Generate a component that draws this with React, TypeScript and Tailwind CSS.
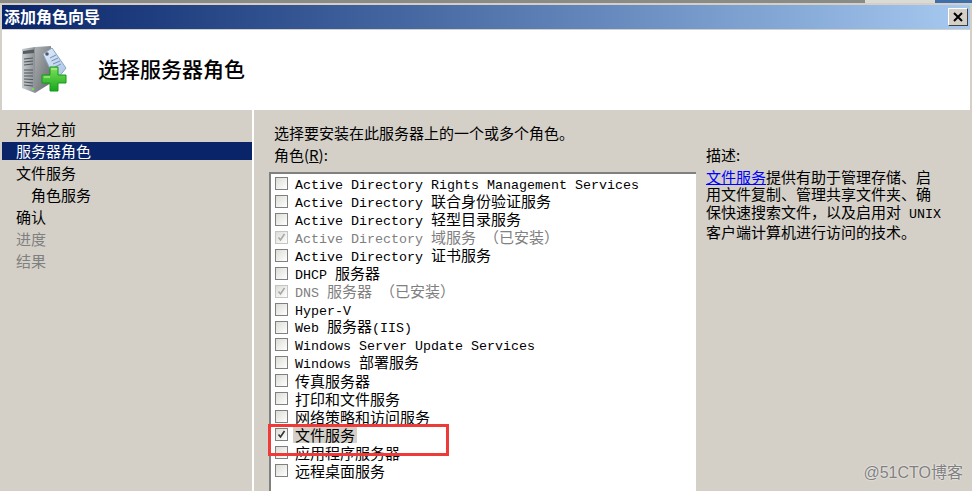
import React from 'react';

const cjk = '"Noto Sans CJK SC", "Liberation Sans", sans-serif';

type Role = { label: React.ReactNode; disabled?: boolean; checked?: boolean; selected?: boolean };

// latin runs are a fixed 8px per char, like the bitmap font of the original
const L: React.FC<{ children: React.ReactNode }> = ({ children }) => (
    <span className="font-['Liberation_Mono',monospace] text-[13.33px] whitespace-pre">{children}</span>
);

const roles: Role[] = [
    { label: <L>Active Directory Rights Management Services</L> },
    { label: <><L>Active Directory </L>联合身份验证服务</> },
    { label: <><L>Active Directory </L>轻型目录服务</> },
    { label: <><L>Active Directory </L>域服务<L> </L>{'\uFF08'}已安装{'\uFF09'}</>, disabled: true, checked: true },
    { label: <><L>Active Directory </L>证书服务</> },
    { label: <><L>DHCP </L>服务器</> },
    { label: <><L>DNS </L>服务器<L> </L>{'\uFF08'}已安装{'\uFF09'}</>, disabled: true, checked: true },
    { label: <L>Hyper-V</L> },
    { label: <><L>Web </L>服务器<L>(IIS)</L></> },
    { label: <L>Windows Server Update Services</L> },
    { label: <><L>Windows </L>部署服务</> },
    { label: '传真服务器' },
    { label: '打印和文件服务' },
    { label: '网络策略和访问服务' },
    { label: '文件服务', checked: true, selected: true },
    { label: '应用程序服务器' },
    { label: '远程桌面服务' },
];

const navItems = [
    { label: '开始之前' },
    { label: '服务器角色', active: true },
    { label: '文件服务' },
    { label: '角色服务', sub: true },
    { label: '确认' },
    { label: '进度', muted: true },
    { label: '结果', muted: true },
];

const ServerIcon = () => (
    <svg width="46" height="48" viewBox="0 0 46 48" className="shrink-0">
        <defs>
            <linearGradient id="front" x1="0" x2="1" y1="0" y2="0">
                <stop offset="0" stopColor="#c9ced2" />
                <stop offset="1" stopColor="#8b9096" />
            </linearGradient>
            <linearGradient id="side" x1="0" x2="1" y1="0" y2="1">
                <stop offset="0" stopColor="#aeb2b4" />
                <stop offset="1" stopColor="#5f6468" />
            </linearGradient>
            <linearGradient id="tag" x1="0" x2="1" y1="0" y2="1">
                <stop offset="0" stopColor="#e4eefa" />
                <stop offset="1" stopColor="#a9c4e6" />
            </linearGradient>
            <linearGradient id="plus" x1="0" x2="0" y1="0" y2="1">
                <stop offset="0" stopColor="#7fe05a" />
                <stop offset="1" stopColor="#16a81c" />
            </linearGradient>
        </defs>
        <path d="M0 3 L13 1 L13 47 L0 42 Z" fill="url(#front)" />
        <path d="M13 1 L29 0 L29 37 L13 47 Z" fill="url(#side)" />
        <path d="M1 5 L12 3.500 L12 7 L1 8 Z" fill="#565b60" />
        <path d="M2 13 L11 12 M2 16 L11 15 M2 19 L11 18 M2 24 L11 24 M2 27 L11 27 M2 30 L11 30 M2 33 L11 33.500 M2 36 L11 37 M2 39 L11 40" stroke="#50555a" strokeWidth="1.200" />
        <rect x="10" y="42" width="2" height="2" fill="#6ee04a" />
        <path d="M21 10 a5 6 0 0 1 8 2 l2 8" fill="none" stroke="#6b7074" strokeWidth="1" />
        <path d="M21 8 L30 2 L44 22 L37 31 L30 27 Z" fill="url(#tag)" stroke="#8aa5c4" strokeWidth="1" />
        <circle cx="25" cy="8" r="1.800" fill="#4c5a6a" />
        <path d="M28 12 L34 9 M29.500 15 L36 12 M31 18 L38 15 M33 21 L39 18" stroke="#6f8fb8" strokeWidth="1" />
        <path d="M28 21 H36 V29 H44 V37 H36 V45 H28 V37 H20 V29 H28 Z" fill="url(#plus)" stroke="#159a1b" strokeWidth="1" />
        <path d="M29 23 H35 M22 31 H28" stroke="#c6f5a8" strokeWidth="1" />
    </svg>
);

const Checkbox: React.FC<{ checked?: boolean; disabled?: boolean }> = ({ checked, disabled }) => (
    <span className={`flex h-[13px] w-[13px] shrink-0 items-center justify-center border bg-gradient-to-br from-[#dcdcd7] to-white ${disabled ? 'border-[#c4c4c4]' : 'border-[#808080]'}`}>
        {checked && (
            <svg width="9" height="9" viewBox="0 0 9 9">
                <path d="M1.500 4.500 L3.500 7 L7.500 1" fill="none" stroke={disabled ? '#a8a8a8' : '#333333'} strokeWidth="1.600" />
            </svg>
        )}
    </span>
);

export default function App() {
    return (
        <div className="relative flex h-[491px] w-[972px] flex-col overflow-hidden bg-[#d4d0c8] text-black" style={{ fontFamily: cjk }}>
            {/* bit of the window behind */}
            <div className="flex h-[3px] shrink-0 bg-[#8a8a86]">
                <div className="ml-auto h-full w-[70px] bg-[#dcdad4]" />
                <div className="h-full w-[37px] bg-[#3f6ea8]" />
            </div>
            <div className="flex min-h-0 flex-1 flex-col pl-[2px] pr-[2px] pt-[2px]">
                {/* title bar */}
                <div className="flex h-[24px] shrink-0 items-center justify-between bg-gradient-to-r from-[#0a246a] to-[#a6caf0] pl-[2px] pr-[2px]">
                    <span className="pb-[2px] text-[16px] font-bold leading-none text-white">添加角色向导</span>
                    <button className="flex h-[18px] w-[20px] items-center justify-center border border-b-[#404040] border-l-white border-r-[#404040] border-t-white bg-[#d4d0c8]">
                        <svg width="10" height="10" viewBox="0 0 10 10">
                            <path d="M1 1 L9 9 M9 1 L1 9" stroke="#000000" strokeWidth="2" />
                        </svg>
                    </button>
                </div>
                {/* header */}
                <div className="mt-[1px] flex h-[80px] shrink-0 items-center bg-white pl-[20px]">
                    <ServerIcon />
                    <h1 className="ml-[30px] pb-[4px] text-[21px] font-medium leading-none">选择服务器角色</h1>
                </div>
                <div className="flex min-h-0 flex-1">
                    {/* left nav */}
                    <div className="w-[250px] shrink-0 pt-[8px]">
                        {navItems.map((item) => (
                            <div key={item.label} className="flex h-[22px] items-center">
                                <div className={`flex h-[18px] w-full items-center pb-[2px] text-[15px] leading-none ${item.sub ? 'pl-[29px]' : 'pl-[14px]'} ${item.active ? 'bg-[#0a246a] text-white' : ''} ${item.muted ? 'text-[#808080]' : ''}`}>
                                    {item.label}
                                </div>
                            </div>
                        ))}
                    </div>
                    <div className="w-[2px] shrink-0 bg-white" />
                    {/* main */}
                    <div className="flex min-w-0 flex-1 pl-[15px]">
                        <div className="w-[427px] shrink-0">
                            <div className="pl-[5px] pt-[14px] text-[15px] leading-[18px]">选择要安装在此服务器上的一个或多个角色。</div>
                            <div className="pl-[5px] pt-[4px] text-[15px] leading-[18px]">角色(<span className="underline">R</span>):</div>
                            <div className="mt-[8px] h-[330px] border-l-2 border-t-2 border-l-[#808080] border-t-[#808080] bg-white pl-[4px] pt-[1px]">
                                {roles.map((role, i) => (
                                    <div key={i} className={`flex h-[17.9px] items-center gap-[7px] text-[15px] leading-none ${role.disabled ? 'text-[#808080]' : ''}`}>
                                        <Checkbox checked={role.checked} disabled={role.disabled} />
                                        <span className={`whitespace-pre ${role.selected ? '-ml-[2px] bg-[#d4d0c8] px-[2px] py-[1px]' : ''}`}>{role.label}</span>
                                    </div>
                                ))}
                            </div>
                        </div>
                        <div className="shrink-0 whitespace-nowrap pl-[10px] pt-[36px] text-[15px] leading-[17.500px]">
                            <div>描述:</div>
                            <div className="mt-[4px]">
                                <div><span className="text-[#0000ff] underline">文件服务</span>提供有助于管理存储、启</div>
                                <div>用文件复制、管理共享文件夹、确</div>
                                <div>保快速搜索文件{'\uFF0C'}以及启用对<L> UNIX</L></div>
                                <div>客户端计算机进行访问的技术。</div>
                            </div>
                        </div>
                    </div>
                </div>
            </div>
            {/* red annotation drawn over the screenshot */}
            <div className="absolute left-[268px] top-[424px] h-[32px] w-[181px] border-[3px] border-[#ef3a3a]" />
            <div className="absolute bottom-[10px] right-[9px] text-[16px] leading-none text-[#808080] [text-shadow:0_0_2px_#ffffff]" style={{ fontFamily: '"Liberation Sans", "Noto Sans CJK SC", sans-serif' }}>
                @51CTO博客
            </div>
        </div>
    );
}
